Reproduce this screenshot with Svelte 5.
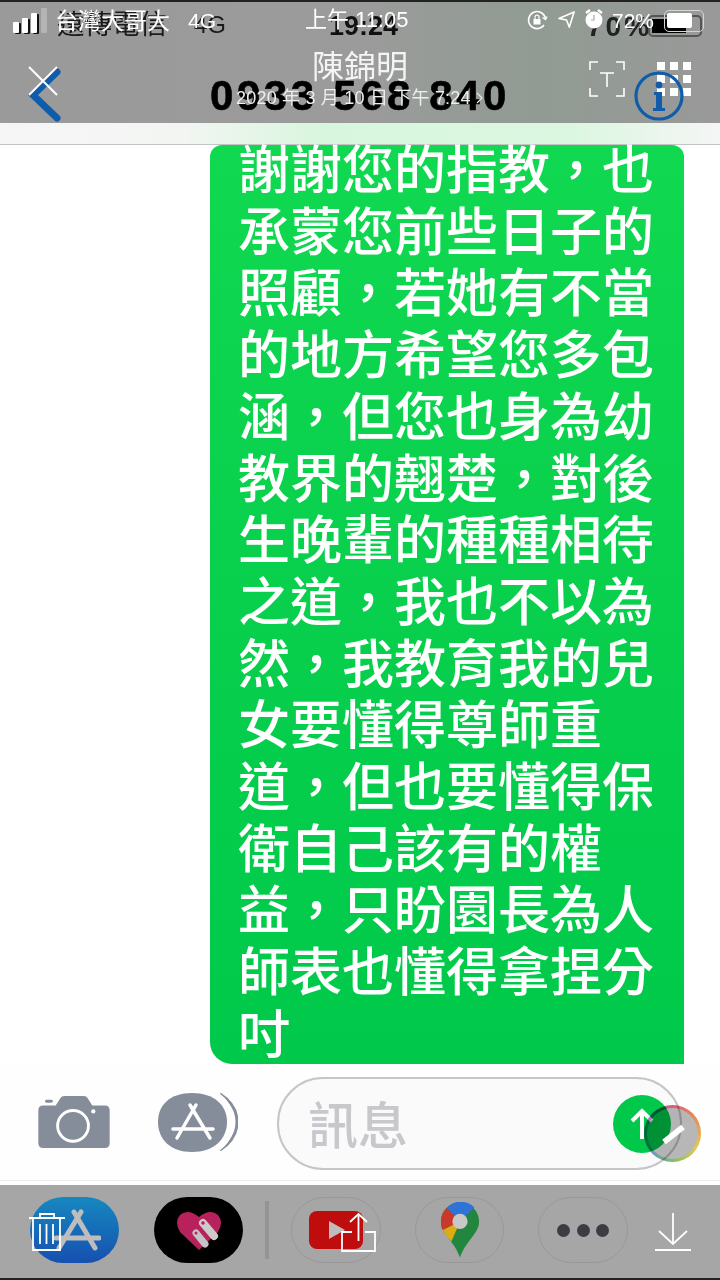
<script>
  const lines = ['謝謝您的指教,也','承蒙您前些日子的','照顧,若她有不當','的地方希望您多包','涵,但您也身為幼','教界的翹楚,對後','生晚輩的種種相待','之道,我也不以為','然,我教育我的兒','女要懂得尊師重','道,但也要懂得保','衛自己該有的權','益,只盼園長為人','師表也懂得拿捏分','吋'].map((l) => l.replaceAll(',', '\uFF0C'));
</script>

<div class="page">
  <header class="top">
    <div class="ghost">
      <span class="g-carrier">遠傳電信</span>
      <span class="g-net">4G</span>
      <span class="g-time">19:24</span>
      <span class="g-pct">70%</span>
      <span class="g-batt"><b></b></span>
    </div>
    <div class="status">
      <span class="signal"><i></i><i></i><i></i><i></i></span>
      <span class="carrier">台灣大哥大</span>
      <span class="net">4G</span>
      <span class="time">上午 11:05</span>
      <svg class="ico-lock" width="22" height="22" viewBox="0 0 22 22" fill="none" stroke="#fff" stroke-width="1.600"><path d="M18 16a8.500 8.500 0 1 1 1.500-6"/><path d="M16.500 8.500l3 2 1.500-3" stroke-width="1.300"/><rect x="7.500" y="10" width="7" height="5.500" fill="#fff" stroke="none"/><path d="M9 10V8.200a2 2 0 0 1 4 0V10" stroke-width="1.200"/></svg>
      <svg class="ico-loc" width="19" height="19" viewBox="0 0 20 20" fill="none" stroke="#fff" stroke-width="1.700" stroke-linejoin="round"><path d="M18 2 2 9l8 1.500L13 18z"/></svg>
      <svg class="ico-alarm" width="22" height="22" viewBox="0 0 22 22"><circle cx="11" cy="12" r="8.500" fill="#fff"/><path d="M3 5l4-3M19 5l-4-3" stroke="#fff" stroke-width="2.400"/><path d="M11 7v5h-3" stroke="#aaa" stroke-width="1.200" fill="none"/></svg>
      <span class="pct">72%</span>
      <span class="batt"><b></b></span>
    </div>

    <div class="title">陳錦明</div>
    <div class="number">0933 568 840</div>
    <div class="date">2020 年 3 月 10 日 下午 7:24 <svg width="7" height="12" viewBox="0 0 7 12" fill="none" stroke="#e8e8e8" stroke-width="1.200"><path d="M1 1l5 5-5 5"/></svg></div>

    <svg class="back" width="34" height="54" viewBox="0 0 34 54" fill="none" stroke="#0f5cab" stroke-width="7" stroke-linecap="round"><path d="M30 4 6 27l24 23"/></svg>
    <svg class="close" width="30" height="30" viewBox="0 0 30 30" stroke="#fff" stroke-width="2"><path d="M1 1l28 28M29 1 1 29"/></svg>
    <svg class="scan" width="36" height="36" viewBox="0 0 36 36" fill="none" stroke="#fff" stroke-width="1.600"><path d="M1 9V1h8M27 1h8v8M1 27v8h8M27 35h8v-8"/><path d="M11 12h14M18 12v14"/></svg>
    <svg class="grid-ico" width="34" height="34" viewBox="0 0 34 34" fill="#fff"><rect x="0" y="0" width="8" height="8"/><rect x="13" y="0" width="8" height="8"/><rect x="26" y="0" width="8" height="8"/><rect x="0" y="13" width="8" height="8"/><rect x="13" y="13" width="8" height="8"/><rect x="26" y="13" width="8" height="8"/><rect x="0" y="26" width="8" height="8"/><rect x="13" y="26" width="8" height="8"/><rect x="26" y="26" width="8" height="8"/></svg>
    <svg class="info" width="50" height="52" viewBox="0 0 50 52" fill="none"><circle cx="25" cy="26" r="23" stroke="#0f5cab" stroke-width="3.200"/><circle cx="25" cy="15" r="3.400" fill="#0f5cab"/><path d="M20 22h8v16h3v3H19v-3h3V25h-2z" fill="#0f5cab"/></svg>
  </header>

  <div class="band"></div>

  <main class="thread">
    <div class="bubble">
      {#each lines as line}<div class="line">{line}</div>{/each}
    </div>
  </main>

  <section class="composer">
    <svg class="camera" width="72" height="54" viewBox="0 0 74 56"><path d="M5 11h13l5-8q1-2 4-2h20q3 0 4 2l5 8h13q5 0 5 5v34q0 5-5 5H5q-5 0-5-5V16q0-5 5-5z" fill="#868d9a"/><rect x="7" y="5" width="8" height="3" rx="1.500" fill="#868d9a"/><circle cx="36" cy="32" r="16" fill="none" stroke="#fff" stroke-width="3"/><circle cx="57" cy="17" r="2.200" fill="#fff"/></svg>
    <svg class="store" width="80" height="60" viewBox="0 0 80 60">
      <path d="M62 2q17 11 17 28T62 58" fill="none" stroke="#868d9a" stroke-width="3"/>
      <path d="M59 1q16 10 16 29T59 59" fill="none" stroke="#fff" stroke-width="2"/>
      <path d="M34 1C56 1 69 13 69 30S56 60 34 60 0 47 0 30 12 1 34 1z" fill="#868d9a"/>
      <path d="M32 13l20 33M38 13 19 46M15 37h40" stroke="#fff" stroke-width="3.500" stroke-linecap="round" fill="none"/>
    </svg>
    <div class="field">
      <span class="placeholder">訊息</span>
      <span class="send"><svg width="24" height="32" viewBox="0 0 24 32" fill="none" stroke="#fff" stroke-width="4"><path d="M12 31V3M2 13 12 3l10 10"/></svg></span>
    </div>
    <span class="pen">
      <svg width="28" height="28" viewBox="0 0 28 28" stroke="#fff" stroke-width="6"><path d="M5 22 24 7"/></svg>
    </span>
  </section>

  <footer class="dock">
    <span class="pill appstore"><svg width="48" height="42" viewBox="0 0 48 42" fill="none" stroke="#bdbdbd" stroke-width="5" stroke-linecap="round"><path d="M21 3l21 36M28 3 6 39M3 29h43"/></svg></span>
    <span class="pill dark">
      <svg width="46" height="40" viewBox="0 0 46 40"><path d="M23 40 4 22Q-2 12 4 5q8-7 19 2Q34-2 42 5q6 7 0 17z" fill="#b8225c"/><path d="M27 13 38 26" stroke="#cbcbcb" stroke-width="8" stroke-linecap="round"/><path d="M20 23 29 34" stroke="#c4c4c4" stroke-width="7" stroke-linecap="round"/><circle cx="27" cy="13" r="1.800" fill="#b8225c"/><circle cx="20" cy="23" r="1.500" fill="#b8225c"/></svg>
    </span>
    <span class="divider"></span>
    <span class="pill outline yt"><svg width="54" height="38" viewBox="0 0 54 38"><rect width="54" height="38" rx="8" fill="#bf0d0d"/><path d="M20 10 36 19 20 28z" fill="#bdbdbd"/></svg></span>
    <span class="pill outline maps">
      <svg width="40" height="56" viewBox="0 0 42 58">
        <path d="M21 0a20 20 0 0 1 20 20c0 13-14 20-20 38C15 40 1 33 1 20A20 20 0 0 1 21 0z" fill="#23863f"/>
        <path d="M7 6a20 20 0 0 1 29-1L21 20z" fill="#2f72d8"/>
        <path d="M7 6Q1 12 1 20q0 6 2 9l18-9z" fill="#c9392b"/>
        <path d="M3 29q3 6 9 12l9-21z" fill="#dfab12"/>
        <circle cx="21" cy="20" r="8" fill="#c8c8c8"/>
      </svg>
    </span>
    <span class="pill outline dots"><i></i><i></i><i></i></span>
  </footer>

  <svg class="trash" width="36" height="38" viewBox="0 0 36 38" fill="none" stroke="#fff" stroke-width="1.800"><path d="M0 5h36M11 5V1h14v4M4 5v32h27V5M11 11v20M17.500 11v20M24 11v20"/></svg>
  <svg class="share" width="36" height="40" viewBox="0 0 36 40" fill="none" stroke="#fff" stroke-width="1.800"><path d="M11 20H1v19h33V20H24M17.500 29V2M9 10l8.500-8L26 10"/></svg>
  <svg class="download" width="36" height="38" viewBox="0 0 36 38" fill="none" stroke="#fff" stroke-width="1.800"><path d="M18 0v31M4 18l14 13 14-13M0 37h36"/></svg>
</div>

<style>
  :global(body) { margin: 0; background: #fff; }
  .page {
    position: relative;
    width: 720px;
    height: 1280px;
    overflow: hidden;
    display: flex;
    flex-direction: column;
    background: #fff;
    font-family: "Liberation Sans", "Noto Sans CJK TC", sans-serif;
  }
  .top {
    position: relative;
    flex: 0 0 123px;
    box-sizing: border-box;
    border-top: 2px solid #222;
    background: linear-gradient(90deg, #9a9a9a 0%, #9b9b9b 50%, #919b93 75%, #999 100%);
    text-align: center;
    color: #fff;
  }
  .ghost, .status { position: absolute; inset: 0; color: #111; }
  .ghost > *, .status > * { position: absolute; white-space: nowrap; }
  .status { color: #fff; font-size: 21px; line-height: 26px; }

  .g-carrier { left: 57px; top: 8px; font-size: 27.500px; line-height: 30px; color: #1a1a1a; }
  .g-net { left: 194px; top: 9px; font-size: 24px; line-height: 28px; color: #1a1a1a; }
  .g-time { left: 329px; top: 10px; font-size: 27px; line-height: 28px; font-weight: 700; }
  .g-pct { left: 587px; top: 10px; font-size: 28px; line-height: 30px; font-weight: 700; color: #222; letter-spacing: 3px; }
  .g-batt {
    left: 648px; top: 13px;
    width: 54px; height: 22px;
    box-sizing: border-box;
    border: 2px solid #555;
    border-radius: 5px;
    padding: 2px;
  }
  .g-batt b { display: block; width: 34px; height: 14px; background: #000; }

  .signal { left: 13px; top: 6px; display: flex; align-items: flex-end; gap: 3px; height: 25px; }
  .signal i { width: 6px; background: #fff; border-radius: 1px; box-shadow: 2px 1px 0 #111; }
  .signal i:nth-child(1) { height: 11px; }
  .signal i:nth-child(2) { height: 15px; }
  .signal i:nth-child(3) { height: 20px; }
  .signal i:nth-child(4) { height: 25px; background: #b4b4b4; box-shadow: none; margin-left: 1px; }
  .carrier { left: 55px; top: 4px; font-size: 23px; line-height: 30px; }
  .net { left: 188px; top: 6px; font-size: 21px; }
  .time { left: 305px; top: 5px; font-size: 22px; }
  .ico-lock { left: 526px; top: 7px; }
  .ico-loc { left: 557px; top: 8px; }
  .ico-alarm { left: 583px; top: 6px; }
  .pct { left: 612px; top: 6px; font-size: 21px; }
  .batt {
    left: 664px; top: 8px;
    width: 40px; height: 22px;
    box-sizing: border-box;
    border: 1.500px solid #d4d4d4;
    border-radius: 5px;
    padding: 2px;
  }
  .batt b { display: block; width: 25px; height: 15px; background: #fff; border-radius: 2px; }

  .title {
    position: absolute;
    left: 0; right: 0;
    top: 48px;
    font-size: 32px;
    line-height: 34px;
    color: #f4f4f4;
  }
  .number {
    position: absolute;
    left: 0; right: 0;
    top: 71px;
    font-size: 42px;
    line-height: 46px;
    font-weight: 700;
    color: #000;
    letter-spacing: 3.600px;
    -webkit-text-stroke: 0.600px #000;
  }
  .date {
    position: absolute;
    left: 236px;
    top: 84px;
    font-size: 18px;
    line-height: 24px;
    color: #eee;
    white-space: nowrap;
    letter-spacing: 0.200px;
  }
  .back { position: absolute; left: 27px; top: 66px; }
  .close { position: absolute; left: 28px; top: 64px; }
  .scan { position: absolute; left: 589px; top: 59px; }
  .grid-ico { position: absolute; left: 657px; top: 60px; }
  .info { position: absolute; left: 634px; top: 68px; }
  .band {
    flex: 0 0 21px;
    box-sizing: content-box;
    background: linear-gradient(90deg, #f6f6f6 0%, #f3f5f3 25%, #d8f6dd 45%, #dcf7e1 80%, #f5f5f5 100%);
    border-bottom: 1px solid #c4c4c4;
  }
  .thread {
    flex: 0 0 919px;
    box-sizing: border-box;
    display: flex;
    justify-content: flex-end;
    padding-right: 36px;
  }
  .bubble {
    width: 474px;
    box-sizing: border-box;
    padding-left: 28px;
    height: 919px;
    background: linear-gradient(180deg, #10d850 0%, #00c84a 100%);
    border-radius: 12px 12px 0 22px;
    color: #fff;
    font-size: 52px;
    line-height: 61.700px;
    font-weight: 500;
    white-space: nowrap;
  }
  .composer {
    position: relative;
    flex: 0 0 117px;
    display: flex;
    align-items: center;
    box-sizing: border-box;
    padding-left: 38px;
    background: #fdfefd;
    border-bottom: 1px solid #eee;
  }
  .line:first-child { margin-top: -4px; }
  .camera { flex: none; }
  .store { margin-left: 48px; flex: none; }
  .field {
    position: absolute;
    left: 277px;
    top: 13px;
    width: 405px;
    height: 93px;
    box-sizing: border-box;
    border: 2px solid #c6c6ca;
    border-radius: 46px;
    background: #fafafa;
    display: flex;
    align-items: center;
    justify-content: space-between;
    padding: 0 9px 0 29px;
    font-size: 50px;
    font-weight: 500;
    color: #c7c7cc;
  }
  .placeholder { margin-top: -3px; }
  .send {
    width: 58px;
    height: 58px;
    border-radius: 50%;
    background: #00c84a;
    display: flex;
    align-items: center;
    justify-content: center;
  }
  .pen {
    position: absolute;
    left: 644px;
    top: 41px;
    width: 57px;
    height: 57px;
    display: flex;
    align-items: center;
    justify-content: center;
  }
  .pen::before {
    content: "";
    position: absolute;
    inset: 0;
    box-sizing: border-box;
    border-radius: 50%;
    border: 3.500px solid transparent;
    background:
      linear-gradient(#b8b8b8, #b8b8b8) padding-box,
      conic-gradient(#e55a7a, #e8934f, #e8c94f, #7fbf6a, #6d8ee0, #b478d0, #e55a7a) border-box;
    mix-blend-mode: multiply;
  }
  .pen svg { position: relative; }
  .dock {
    position: relative;
    flex: 1;
    box-sizing: border-box;
    border-top: 4px solid #fff;
    border-bottom: 2px solid #222;
    background: #a6a6a6;
    display: flex;
    align-items: flex-start;
    padding: 12px 0 0 30px;
  }
  .pill {
    flex: none;
    width: 89px;
    height: 66px;
    border-radius: 33px;
    box-sizing: border-box;
    display: flex;
    align-items: center;
    justify-content: center;
  }
  .appstore { background: linear-gradient(180deg, #1688c0 0%, #1650b0 100%); padding-left: 4px; margin-right: 35px; }
  .dark { background: #000; margin-right: 22px; }
  .divider { width: 4px; height: 58px; margin: 4px 22px 0 0; background: #949494; flex: none; }
  .outline { border: 1.500px solid #999; }
  .yt { width: 90px; margin-right: 34px; }
  .maps { margin-right: 34px; }
  .dots { width: 90px; gap: 6.500px; }
  .dots i { width: 13px; height: 13px; background: #3c3d42; border-radius: 50%; }
  .trash { position: absolute; left: 29px; top: 1213px; }
  .share { position: absolute; left: 341px; top: 1212px; }
  .download { position: absolute; left: 655px; top: 1213px; }
</style>
